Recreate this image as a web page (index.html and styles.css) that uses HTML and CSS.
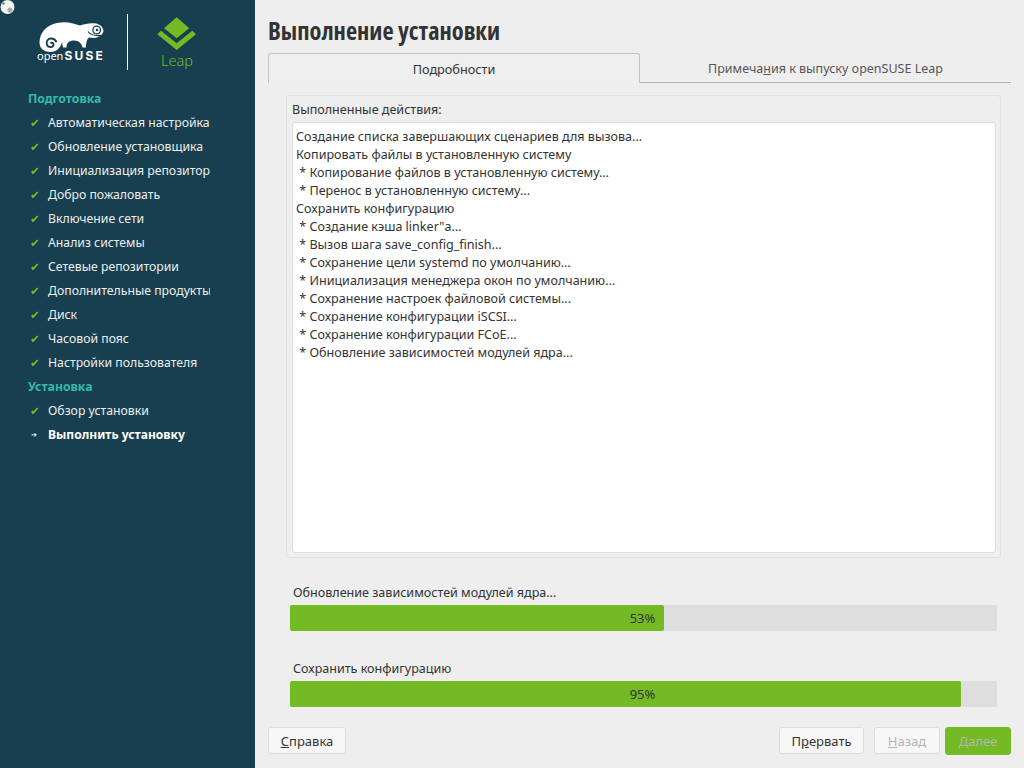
FILE: index.html
```html
<!DOCTYPE html>
<html lang="ru">
<head>
    <meta charset="UTF-8">
    <title>Выполнение установки</title>
    <link rel="stylesheet" href="styles.css">
</head>
<body>
    <aside class="sidebar">
        <svg class="cursor" width="16" height="16" viewBox="0 0 16 16">
            <circle cx="7.500" cy="7" r="7" fill="#f4f4f4"/>
            <circle cx="10" cy="10" r="2.500" fill="#aaa"/>
            <circle cx="3.500" cy="3.500" r="1.200" fill="#777"/>
        </svg>
        <div class="logos">
            <div class="logo-suse">
                <svg width="66" height="32" viewBox="39 21 66 32">
                    <path fill="#fff" d="M39.500 43C39.500 36 43 29 50 25.500 57 22 66 21.500 73 23.500L80 25.500C84 24 91 22.500 96 23.500 100 24.200 103 27 103.500 31 102.500 35 99 37.500 94 38L89 37.500C87 39 86 42 86 47.500L82.500 47.500C82 44 79 40.500 74 40.500 69 40.500 66.500 43 66.500 47.500L63 47.500 62 42C61 47 57 52 50 52 44 52 39.500 48 39.500 43Z"/>
                    <path fill="none" stroke="#173f4f" stroke-width="1.900" d="M50.500 43.500C51.500 42 54 43 53.500 45 53 47.500 48.500 48 47 45 45.500 41.500 48 38 52 38.500 54 38.800 55.500 40 56.500 42"/>
                    <circle cx="96.700" cy="30" r="3.800" fill="none" stroke="#173f4f" stroke-width="1.300"/>
                    <circle cx="97" cy="30" r="1.300" fill="#173f4f"/>
                    <path fill="none" stroke="#173f4f" stroke-width="1.100" d="M88 31.500C90 34.500 95 36 101 35.500"/>
                </svg>
                <div class="logo-word">open<b>SUSE</b></div>
            </div>
            <div class="logo-rule"></div>
            <div class="logo-leap">
                <svg width="40" height="33" viewBox="157 17 40 33">
                    <path fill="#73ba25" d="M176.700 17.300L189.300 28.300 176.700 38.300 164 28.300Z"/>
                    <path fill="#73ba25" d="M157.300 34.300L161 30.700 176.700 43.300 192.300 30.700 196 34.300 176.700 50Z"/>
                </svg>
                <div class="leap-word">Leap</div>
            </div>
        </div>
        <div class="steps">
            <div class="step-head">Подготовка</div>
            <div class="step"><span class="check">✔</span><span class="step-name">Автоматическая настройка</span></div>
            <div class="step"><span class="check">✔</span><span class="step-name">Обновление установщика</span></div>
            <div class="step"><span class="check">✔</span><span class="step-name">Инициализация репозитор</span></div>
            <div class="step"><span class="check">✔</span><span class="step-name">Добро пожаловать</span></div>
            <div class="step"><span class="check">✔</span><span class="step-name">Включение сети</span></div>
            <div class="step"><span class="check">✔</span><span class="step-name">Анализ системы</span></div>
            <div class="step"><span class="check">✔</span><span class="step-name">Сетевые репозитории</span></div>
            <div class="step"><span class="check">✔</span><span class="step-name">Дополнительные продукты</span></div>
            <div class="step"><span class="check">✔</span><span class="step-name">Диск</span></div>
            <div class="step"><span class="check">✔</span><span class="step-name">Часовой пояс</span></div>
            <div class="step"><span class="check">✔</span><span class="step-name">Настройки пользователя</span></div>
            <div class="step-head">Установка</div>
            <div class="step"><span class="check">✔</span><span class="step-name">Обзор установки</span></div>
            <div class="step current"><span class="check">➔</span><span class="step-name">Выполнить установку</span></div>
        </div>
    </aside>

    <main class="content">
        <h1>Выполнение установки</h1>
        <div class="tabs">
            <div class="tab active">Подробности</div>
            <div class="tab">Примеча<u>н</u>ия к выпуску openSUSE Leap</div>
        </div>
        <div class="pane">
            <div class="group">
                <div class="group-title">Выполненные действия:</div>
                <div class="log">Создание списка завершающих сценариев для вызова...
Копировать файлы в установленную систему
 * Копирование файлов в установленную систему…
 * Перенос в установленную систему...
Сохранить конфигурацию
 * Создание кэша linker"а…
 * Вызов шага save_config_finish...
 * Сохранение цели systemd по умолчанию…
 * Инициализация менеджера окон по умолчанию…
 * Сохранение настроек файловой системы...
 * Сохранение конфигурации iSCSI…
 * Сохранение конфигурации FCoE...
 * Обновление зависимостей модулей ядра...</div>
            </div>
            <div class="progress-block">
                <div class="progress-label">Обновление зависимостей модулей ядра...</div>
                <div class="bar"><div class="bar-fill" style="width: 374px"></div><span class="bar-text">53%</span></div>
            </div>
            <div class="progress-block second">
                <div class="progress-label">Сохранить конфигурацию</div>
                <div class="bar"><div class="bar-fill" style="width: 671px"></div><span class="bar-text">95%</span></div>
            </div>
        </div>
        <div class="buttons">
            <div class="btn help"><u>С</u>правка</div>
            <div class="btn abort">П<u>р</u>ервать</div>
            <div class="btn back disabled"><u>Н</u>азад</div>
            <div class="btn next disabled"><u>Д</u>алее</div>
        </div>
    </main>
</body>
</html>
```
FILE: styles.css
```css
html, body {
    margin: 0;
    padding: 0;
    height: 100%;
}
body {
    display: flex;
    width: 1024px;
    height: 768px;
    overflow: hidden;
    background-color: #eeeeee;
    color: #333;
    font-family: "Noto Sans", sans-serif;
    font-size: 13px;
}
.sidebar {
    position: relative;
    width: 255px;
    flex: none;
    background-color: #173f4f;
    color: #eee;
}
.cursor {
    position: absolute;
    left: 0;
    top: 0;
}
.logos {
    display: flex;
    height: 87px;
    padding-top: 14px;
    box-sizing: border-box;
}
.logo-suse {
    width: 74px;
    margin-left: 37px;
    padding-top: 7px;
}
.logo-suse svg {
    display: block;
    margin-left: 2px;
}
.logo-word {
    margin-top: -3px;
    color: #fff;
    font-size: 11px;
    line-height: 12px;
    white-space: nowrap;
}
.logo-word b {
    margin-left: 1px;
    font-family: "Inter", sans-serif;
    font-size: 12px;
    font-weight: 700;
    letter-spacing: 2.200px;
}
.logo-rule {
    width: 1px;
    height: 56px;
    margin-left: 16px;
    background-color: #fff;
}
.logo-leap {
    width: 40px;
    margin-left: 29px;
    padding-top: 3px;
    text-align: center;
}
.logo-leap svg {
    display: block;
}
.leap-word {
    margin-top: 1px;
    color: #73ba25;
    font-size: 14.500px;
    font-weight: 300;
    line-height: 18px;
}
.steps {
    width: 210px;
    overflow: hidden;
    font-size: 12.250px;
}
.step-head {
    padding-left: 28px;
    height: 24px;
    line-height: 24px;
    color: #35b9ab;
    font-weight: 700;
}
.step {
    display: flex;
    height: 24px;
    line-height: 24px;
    white-space: nowrap;
}
.check {
    flex: none;
    width: 18px;
    margin-left: 30px;
    color: #73ba25;
    font-family: "DejaVu Sans", sans-serif;
    font-size: 11.500px;
}
.current {
    color: #fff;
    font-size: 12.100px;
    font-weight: 700;
}
.current .check {
    margin-left: 31px;
    width: 17px;
    color: #fff;
    font-size: 7px;
    font-weight: 400;
}
.content {
    display: flex;
    flex-direction: column;
    flex: 1;
    padding: 0 13px 13px;
    min-width: 0;
}
h1 {
    margin: 0;
    height: 53px;
    flex: none;
    line-height: 62px;
    font-family: "Open Sans", sans-serif;
    font-stretch: 75%;
    font-size: 24.400px;
    font-weight: 700;
    color: #333;
}
.tabs {
    display: flex;
    height: 30px;
    flex: none;
    font-size: 12.500px;
}
.tab {
    flex: 1;
    box-sizing: border-box;
    border-bottom: 1px solid #b5b5b5;
    text-align: center;
    line-height: 31px;
    color: #555;
}
.tab.active {
    flex: none;
    width: 372px;
    border: 1px solid #c4c4c4;
    border-bottom: none;
    border-radius: 3px 3px 0 0;
    background-color: #efefef;
    color: #333;
    font-size: 12.700px;
}
.pane {
    flex: 1;
    padding: 12px 10px 0 18px;
    font-size: 12.550px;
}
.group {
    display: flex;
    flex-direction: column;
    box-sizing: border-box;
    height: 463px;
    padding: 5px 4px 4px 5px;
    border: 1px solid #e0e0e0;
    border-radius: 3px;
}
.group-title {
    height: 21px;
    line-height: 18px;
}
.log {
    flex: 1;
    padding: 5px 3px;
    border: 1px solid #ddd;
    border-radius: 3px;
    background-color: #fff;
    line-height: 18px;
    white-space: pre;
}
.progress-block {
    margin: 25px 0 0 4px;
    width: 707px;
}
.progress-block.second {
    margin-top: 28px;
}
.progress-label {
    padding-left: 3px;
    height: 22px;
    line-height: 20px;
}
.bar {
    position: relative;
    height: 26px;
    border-radius: 2px;
    background-color: #dedede;
}
.bar-fill {
    height: 26px;
    border-radius: 2px;
    background-color: #73ba25;
}
.bar-text {
    position: absolute;
    left: 0;
    right: 2px;
    top: 0;
    text-align: center;
    line-height: 27px;
    font-size: 13px;
}
.buttons {
    display: flex;
    flex: none;
}
.btn {
    box-sizing: border-box;
    height: 27px;
    border: 1px solid #ddd;
    border-radius: 3px;
    background-color: #f7f7f7;
    text-align: center;
    line-height: 27px;
}
.help { width: 78px; }
.abort { width: 85px; margin-left: auto; }
.back { width: 66px; margin-left: 10px; }
.next {
    width: 66px;
    height: 28px;
    margin-left: 5px;
    border-color: #73ba25;
    background-color: #73ba25;
}
.disabled { color: #b5b5b5; }
```
